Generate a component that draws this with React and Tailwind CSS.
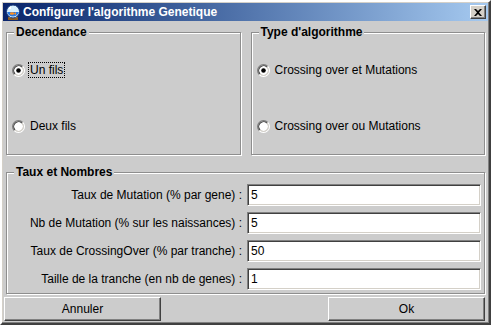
import React from 'react';

const font = { fontFamily: '"Liberation Sans", Arial, sans-serif' };

const FishBowl = () => (
    <svg width="16" height="16" viewBox="0 0 16 16">
        <rect x="3" y="13" width="10" height="3" fill="#8a5a1e" />
        <rect x="4" y="13" width="8" height="1" fill="#c89040" />
        <circle cx="8" cy="7.5" r="6.5" fill="#d8f0ff" stroke="#1a3a7a" strokeWidth="1" />
        <path d="M2.2 8 A6 6 0 0 0 13.8 8 Z" fill="#2a7ae0" />
        <ellipse cx="7" cy="9.5" rx="2.2" ry="1.3" fill="#ff9020" />
        <path d="M9 9.5 L11 8 L11 11 Z" fill="#ff9020" />
        <rect x="4" y="3" width="2" height="2" fill="#ffffff" />
    </svg>
);

const Radio = ({ checked }) => (
    <svg width="13" height="13" viewBox="0 0 12 12" className="shrink-0">
        <circle cx="6" cy="6" r="4.2" fill="#ffffff" />
        <path d="M2.11 9.89 A5.5 5.5 0 0 1 9.89 2.11" fill="none" stroke="#808080" strokeWidth="1" />
        <path d="M9.89 2.11 A5.5 5.5 0 0 1 2.11 9.89" fill="none" stroke="#ffffff" strokeWidth="1" />
        <path d="M2.82 9.18 A4.5 4.5 0 0 1 9.18 2.82" fill="none" stroke="#404040" strokeWidth="1" />
        <path d="M9.18 2.82 A4.5 4.5 0 0 1 2.82 9.18" fill="none" stroke="#d4d0c8" strokeWidth="1" />
        {checked && <circle cx="6" cy="6" r="2.1" fill="#000000" />}
    </svg>
);

const RadioRow = ({ checked, focused, label }) => (
    <div className="flex items-center pl-[5px] h-[16px]">
        <Radio checked={checked} />
        <span className={`ml-[3px] px-[1px] leading-[14px] border border-dotted ${focused ? 'border-black' : 'border-transparent'}`}>
            {label}
        </span>
    </div>
);

const Group = ({ title, className, children }) => (
    <fieldset className={`border border-[#8e8e8e] shadow-[inset_1px_1px_0_#ffffff,1px_1px_0_#ffffff] ${className}`}>
        <legend className="ml-[7px] px-[2px] text-[12px] font-bold leading-[14px] bg-[#cccccc]">{title}</legend>
        {children}
    </fieldset>
);

const Field = ({ label, value }) => (
    <div className="flex items-center">
        <div className="w-[236px] text-right pr-[1px]">{label}</div>
        <div className="ml-[4px] flex-1 h-[22px] bg-white border border-t-[#808080] border-l-[#808080] border-b-white border-r-white shadow-[inset_1px_1px_0_#404040,inset_-1px_-1px_0_#d4d0c8] flex items-center pl-[3px]">
            {value}
        </div>
    </div>
);

const Button = ({ children }) => (
    <button className="w-[157px] h-[24px] bg-[#cccccc] border border-t-white border-l-white border-b-[#404040] border-r-[#404040] shadow-[inset_-1px_-1px_0_#808080] text-[12px]">
        {children}
    </button>
);

export default function App() {
    return (
        <div className="w-[491px] h-[325px] bg-[#d4d0c8] border-2 border-t-[#ffffff] border-l-[#ffffff] border-b-[#404040] border-r-[#404040] shadow-[inset_-1px_-1px_0_#808080] p-[1px] flex flex-col text-[12px] text-black" style={font}>
            <div className="h-[18px] flex items-center bg-gradient-to-r from-[#0a246a] to-[#a6caf0] pl-[2px] pr-[2px]">
                <FishBowl />
                <span className="ml-[2px] text-white font-bold text-[12px] leading-[16px]">Configurer l'algorithme Genetique</span>
                <div className="ml-auto w-[16px] h-[14px] bg-[#d4d0c8] border border-t-white border-l-white border-b-[#404040] border-r-[#404040] shadow-[inset_-1px_-1px_0_#808080] flex items-center justify-center">
                    <svg width="8" height="7" viewBox="0 0 8 7">
                        <path d="M0 0 L2 0 L4 2 L6 0 L8 0 L5 3.5 L8 7 L6 7 L4 5 L2 7 L0 7 L3 3.5 Z" fill="#000000" />
                    </svg>
                </div>
            </div>
            <div className="flex-1 bg-[#cccccc] flex flex-col">
                <div className="flex gap-[10px] pl-[3px] pr-[3px] pt-[4px]">
                    <Group title="Decendance" className="flex-1 h-[130px]">
                        <div className="flex flex-col pt-[23px] gap-[40px]">
                            <RadioRow checked focused label="Un fils" />
                            <RadioRow label="Deux fils" />
                        </div>
                    </Group>
                    <Group title="Type d'algorithme" className="flex-1 h-[130px]">
                        <div className="flex flex-col pt-[23px] gap-[40px]">
                            <RadioRow checked label="Crossing over et Mutations" />
                            <RadioRow label="Crossing over ou Mutations" />
                        </div>
                    </Group>
                </div>
                <div className="pl-[3px] pr-[3px] pt-[10px]">
                    <Group title="Taux et Nombres" className="h-[129px]">
                        <div className="flex flex-col gap-[6px] pt-[5px] pr-[3px]">
                            <Field label="Taux de Mutation (% par gene) :" value="5" />
                            <Field label="Nb de Mutation (% sur les naissances) :" value="5" />
                            <Field label="Taux de CrossingOver (% par tranche) :" value="50" />
                            <Field label="Taille de la tranche (en nb de genes) :" value="1" />
                        </div>
                    </Group>
                </div>
                <div className="flex justify-between pl-[1px] pr-[3px] pt-[3px]">
                    <Button>Annuler</Button>
                    <Button>Ok</Button>
                </div>
            </div>
        </div>
    );
}
